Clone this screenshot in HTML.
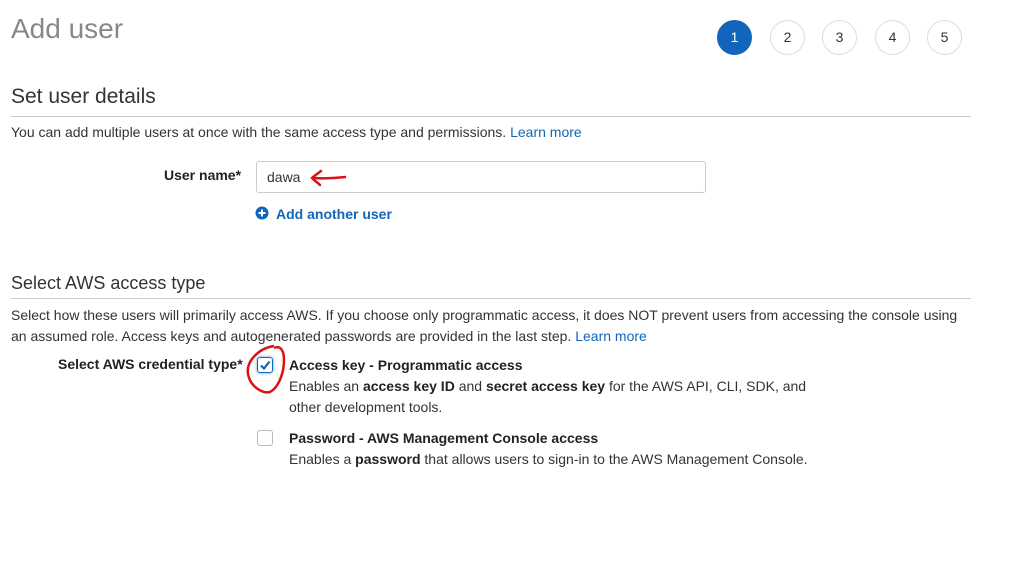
<!DOCTYPE html>
<html><head><meta charset="utf-8"><style>
body{margin:0;width:1015px;height:575px;background:#fff;font-family:"Liberation Sans",Arial,sans-serif;color:#333;position:relative;overflow:hidden}
.a{position:absolute;white-space:nowrap}
.c{position:absolute;top:20px;width:33px;height:33px;border:1px solid #ddd;border-radius:50%;text-align:center;line-height:33px;font-size:14px;color:#333;background:#fff}
.hr{position:absolute;left:11px;width:960px;height:1px;background:#ccc}
.t{font-size:14px}
a{color:#1166bb;text-decoration:none}
b{color:#222}
</style></head><body>
<div class="a" style="left:11px;top:13px;font-size:28px;color:#888">Add user</div>
<div class="c" style="left:717px;background:#1166bb;border-color:#1166bb;color:#fff">1</div>
<div class="c" style="left:770px">2</div>
<div class="c" style="left:822px">3</div>
<div class="c" style="left:875px">4</div>
<div class="c" style="left:927px">5</div>
<div class="a" style="left:11px;top:85px;font-size:21px">Set user details</div>
<div class="hr" style="top:116px"></div>
<div class="a t" style="left:11px;top:124px">You can add multiple users at once with the same access type and permissions. <a>Learn more</a></div>
<div class="a t" style="left:164px;top:167px;font-weight:bold;color:#222">User name*</div>
<div class="a" style="left:256px;top:161px;width:448px;height:30px;border:1px solid #ccc;border-radius:3px"></div>
<div class="a t" style="left:267px;top:169px">dawa</div>
<svg class="a" style="left:305px;top:166px" width="45" height="22"><path d="M40 11 C30 12,20 13,9 12 M16 5 C12 8,9 10,7 12 C10 15,13 17,15 19" stroke="#dd1111" stroke-width="2.5" fill="none" stroke-linecap="round"/></svg>
<svg class="a" style="left:255px;top:206px" width="14" height="14"><circle cx="7" cy="7" r="6.5" fill="#1166bb"/><path d="M7 3.5v7M3.5 7h7" stroke="#fff" stroke-width="2"/></svg>
<div class="a t" style="left:276px;top:206px;font-weight:bold;color:#1166bb">Add another user</div>
<div class="a" style="left:11px;top:273px;font-size:18px">Select AWS access type</div>
<div class="hr" style="top:298px"></div>
<div class="a t" style="left:11px;top:305px;line-height:21px">Select how these users will primarily access AWS. If you choose only programmatic access, it does NOT prevent users from accessing the console using<br>an assumed role. Access keys and autogenerated passwords are provided in the last step. <a>Learn more</a></div>
<div class="a t" style="left:58px;top:356px;font-weight:bold;color:#222">Select AWS credential type*</div>
<div class="a" style="left:257px;top:357px;width:14px;height:14px;border:1px solid #1166bb;border-radius:3px;box-shadow:0 0 3px #69c"></div>
<svg class="a" style="left:258px;top:358px" width="14" height="14"><path d="M3 7.5 L6 10.5 L11.5 3.5" stroke="#1166bb" stroke-width="2.2" fill="none"/></svg>
<svg class="a" style="left:240px;top:340px" width="56" height="58"><path d="M34 6 C20 8,6 20,8 34 C10 46,22 54,30 52 C38 48,44 34,44 20 C44 10,40 5,34 8" stroke="#dd1111" stroke-width="2.5" fill="none"/></svg>
<div class="a t" style="left:289px;top:355px;line-height:21px"><b>Access key - Programmatic access</b><br>Enables an <b>access key ID</b> and <b>secret access key</b> for the AWS API, CLI, SDK, and<br>other development tools.</div>
<div class="a" style="left:257px;top:430px;width:14px;height:14px;border:1px solid #bbb;border-radius:3px"></div>
<div class="a t" style="left:289px;top:428px;line-height:21px"><b>Password - AWS Management Console access</b><br>Enables a <b>password</b> that allows users to sign-in to the AWS Management Console.</div>
</body></html>
